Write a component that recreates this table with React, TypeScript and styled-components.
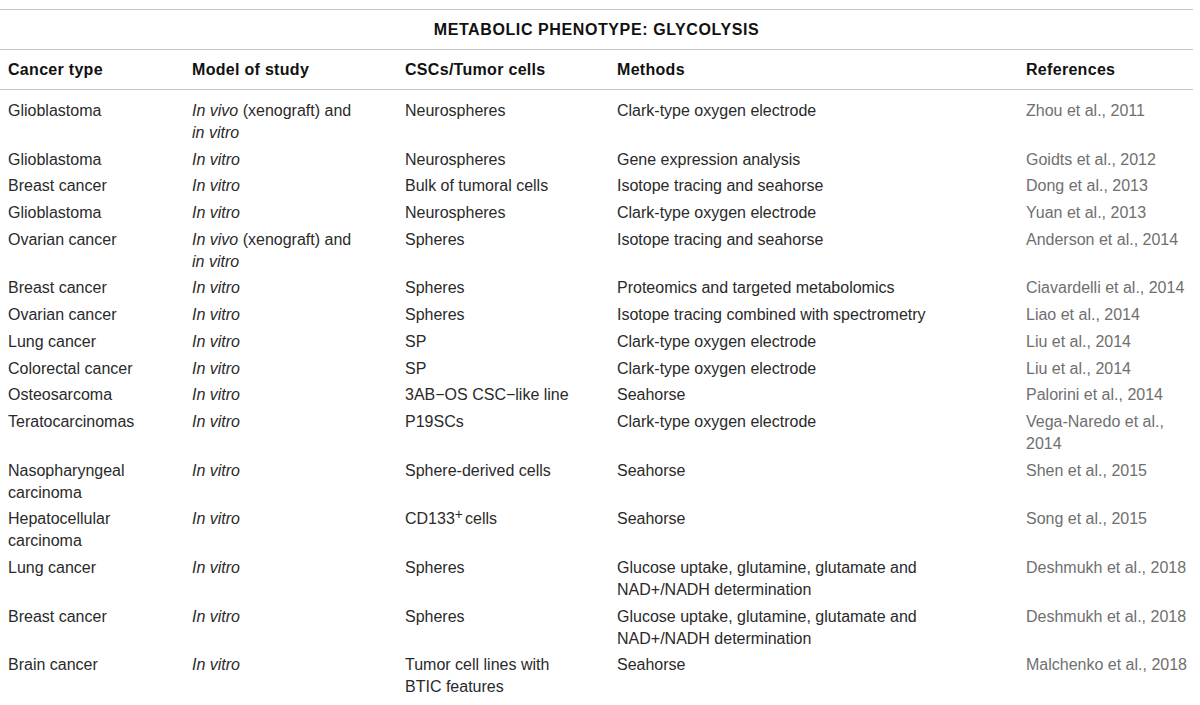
import React from "react";
import styled, { createGlobalStyle } from "styled-components";

const Global = createGlobalStyle`
  html, body { margin: 0; padding: 0; background: #fff; }
  body { font-family: "Liberation Sans", Arial, Helvetica, sans-serif; }
`;

const Page = styled.div`
  padding-top: 9px;
  width: 1193px;
`;

const Table = styled.table`
  width: 1193px;
  border-collapse: collapse;
  table-layout: fixed;
  font-size: 16px;
  color: #2a2a2a;
`;

const TitleCell = styled.th`
  height: 39px;
  padding: 0;
  text-align: center;
  font-weight: bold;
  font-size: 16px;
  letter-spacing: 0.6px;
  color: #111;
  border-top: 1px solid #c4c4c4;
  border-bottom: 1px solid #c4c4c4;
`;

const HeadCell = styled.th`
  height: 39px;
  padding: 0 0 0 8px;
  text-align: left;
  font-weight: bold;
  letter-spacing: 0.3px;
  color: #111;
  border-bottom: 1px solid #c4c4c4;
`;

const Row = styled.tr<{ $first?: boolean }>`
  & > td {
    padding-top: ${(p) => (p.$first ? "10px" : "2.7px")};
  }
`;

const Cell = styled.td<{ $pr?: number; $ref?: boolean }>`
  vertical-align: top;
  line-height: 22px;
  padding: 2.7px ${(p) => p.$pr ?? 0}px 2px 8px;
  color: ${(p) => (p.$ref ? "#6f6f6f" : "#2a2a2a")};
`;

const Em = styled.i`
  font-style: italic;
`;

const Sup = styled.sup`
  font-size: 14px;
  line-height: 0;
  vertical-align: 5px;
  margin-right: 2px;
`;

type R = [React.ReactNode, React.ReactNode, React.ReactNode, React.ReactNode, string];

const iv = <Em>In vitro</Em>;
const vivo = (
  <>
    <Em>In vivo</Em> (xenograft) and <Em>in vitro</Em>
  </>
);
const glu = "Glucose uptake, glutamine, glutamate and NAD+/NADH determination";

const rows: R[] = [
  ["Glioblastoma", vivo, "Neurospheres", "Clark-type oxygen electrode", "Zhou et al., 2011"],
  ["Glioblastoma", iv, "Neurospheres", "Gene expression analysis", "Goidts et al., 2012"],
  ["Breast cancer", iv, "Bulk of tumoral cells", "Isotope tracing and seahorse", "Dong et al., 2013"],
  ["Glioblastoma", iv, "Neurospheres", "Clark-type oxygen electrode", "Yuan et al., 2013"],
  ["Ovarian cancer", vivo, "Spheres", "Isotope tracing and seahorse", "Anderson et al., 2014"],
  ["Breast cancer", iv, "Spheres", "Proteomics and targeted metabolomics", "Ciavardelli et al., 2014"],
  ["Ovarian cancer", iv, "Spheres", "Isotope tracing combined with spectrometry", "Liao et al., 2014"],
  ["Lung cancer", iv, "SP", "Clark-type oxygen electrode", "Liu et al., 2014"],
  ["Colorectal cancer", iv, "SP", "Clark-type oxygen electrode", "Liu et al., 2014"],
  ["Osteosarcoma", iv, "3AB\u2212OS CSC\u2212like line", "Seahorse", "Palorini et al., 2014"],
  ["Teratocarcinomas", iv, "P19SCs", "Clark-type oxygen electrode", "Vega-Naredo et al., 2014"],
  ["Nasopharyngeal carcinoma", iv, "Sphere-derived cells", "Seahorse", "Shen et al., 2015"],
  [
    "Hepatocellular carcinoma",
    iv,
    <>
      CD133<Sup>+</Sup>cells
    </>,
    "Seahorse",
    "Song et al., 2015",
  ],
  ["Lung cancer", iv, "Spheres", glu, "Deshmukh et al., 2018"],
  ["Breast cancer", iv, "Spheres", glu, "Deshmukh et al., 2018"],
  ["Brain cancer", iv, "Tumor cell lines with BTIC features", "Seahorse", "Malchenko et al., 2018"],
];

export default function App() {
  return (
    <>
      <Global />
      <Page>
        <Table>
          <colgroup>
            <col style={{ width: 184 }} />
            <col style={{ width: 213 }} />
            <col style={{ width: 212 }} />
            <col style={{ width: 409 }} />
            <col style={{ width: 175 }} />
          </colgroup>
          <thead>
            <tr>
              <TitleCell colSpan={5}>METABOLIC PHENOTYPE: GLYCOLYSIS</TitleCell>
            </tr>
            <tr>
              <HeadCell>Cancer type</HeadCell>
              <HeadCell>Model of study</HeadCell>
              <HeadCell>CSCs/Tumor cells</HeadCell>
              <HeadCell>Methods</HeadCell>
              <HeadCell>References</HeadCell>
            </tr>
          </thead>
          <tbody>
            {rows.map((r, i) => (
              <Row key={i} $first={i === 0}>
                <Cell $pr={4}>{r[0]}</Cell>
                <Cell $pr={40}>{r[1]}</Cell>
                <Cell $pr={30}>{r[2]}</Cell>
                <Cell $pr={20}>{r[3]}</Cell>
                <Cell $ref>{r[4]}</Cell>
              </Row>
            ))}
          </tbody>
        </Table>
      </Page>
    </>
  );
}
